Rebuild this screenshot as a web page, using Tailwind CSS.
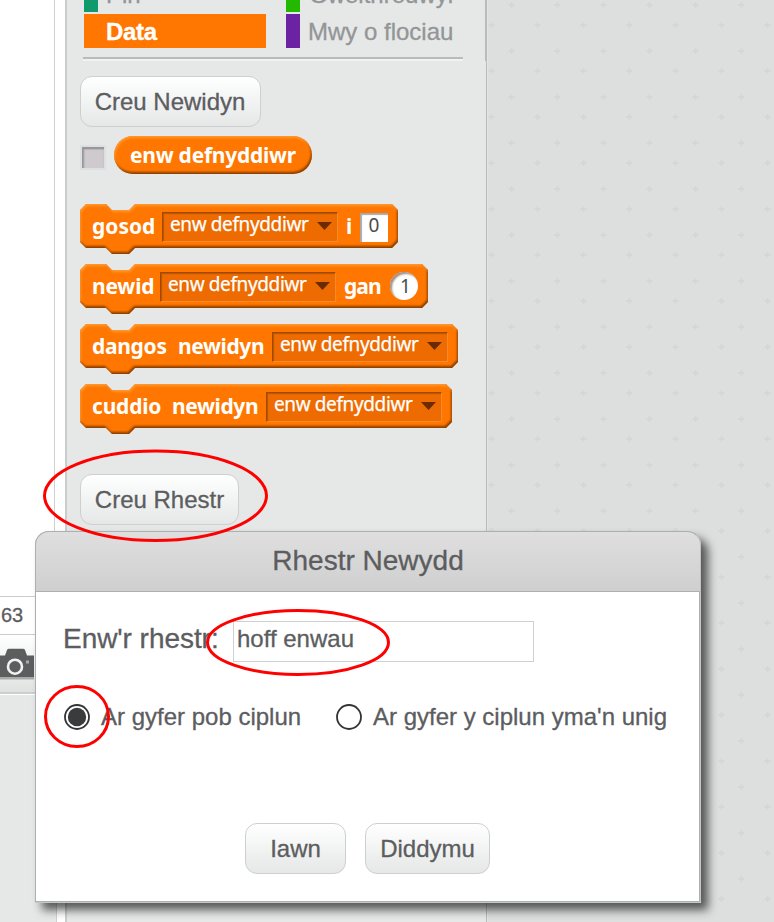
<!DOCTYPE html>
<html lang="cy">
<head>
<meta charset="utf-8">
<title>Scratch – Data</title>
<script src="https://cdn.jsdelivr.net/npm/@tailwindcss/browser@4"></script>
</head>
<body class="relative flex h-[922px] w-[774px] overflow-hidden bg-white font-['Liberation_Sans',Arial,sans-serif] text-[24px] text-[#5c5d5f] [-webkit-text-stroke:0.3px_currentColor]">

<!-- shared bevel filter -->
<svg class="absolute h-0 w-0" aria-hidden="true">
  <defs>
    <filter id="bevel" x="-5%" y="-10%" width="110%" height="120%" color-interpolation-filters="sRGB">
      <feGaussianBlur in="SourceAlpha" stdDeviation="1.3" result="b"/>
      <feOffset in="b" dx="-1.3" dy="-1.7" result="bo"/>
      <feComposite in="SourceAlpha" in2="bo" operator="out" result="darkA"/>
      <feFlood flood-color="#6a2e00" flood-opacity="0.8"/>
      <feComposite in2="darkA" operator="in" result="dark"/>
      <feOffset in="b" dx="1.3" dy="1.6" result="lo"/>
      <feComposite in="SourceAlpha" in2="lo" operator="out" result="lightA"/>
      <feFlood flood-color="#ffa640" flood-opacity="0.7"/>
      <feComposite in2="lightA" operator="in" result="light"/>
      <feMerge><feMergeNode in="SourceGraphic"/><feMergeNode in="dark"/><feMergeNode in="light"/></feMerge>
    </filter>
  </defs>
</svg>

<!-- stage column -->
<div class="flex w-[65px] shrink-0 flex-col">
  <div class="flex h-[750px] w-[55px] flex-col border-r border-[#cfd0d1]">
    <div class="h-[596px] bg-white"></div>
    <div class="h-[39px] border-y border-[#cbcccd] pl-px text-[20px] leading-[37px]">63</div>
    <div class="flex h-[59px] flex-col border-b-2 border-b-[#cccece] bg-linear-to-b from-white to-[#e0e2e2] pt-[13px]">
      <svg class="h-[32px] w-[35px]" viewBox="0 0 35 32">
        <path d="M0 7.500H5L7 2Q7.500 0.700 9 0.700H23Q24.500 0.700 25 2L27 7.500H34V29H0Z" fill="#5c5d5f"/>
        <rect x="0" y="29" width="34" height="2.500" fill="#a9abab"/>
        <circle cx="15" cy="18.700" r="7" fill="#5c5d5f" stroke="#f2f2f2" stroke-width="2.600"/>
        <rect x="26" y="12.500" width="3" height="3" fill="#a9abab"/>
      </svg>
    </div>
    <div class="grow border-t border-white bg-[#e5e8e7]"></div>
  </div>
  <div class="w-[57px] grow border-r border-[#cfd0d1] bg-[#e5e8e7]"></div>
</div>

<!-- palette -->
<div class="flex w-[422px] shrink-0 flex-col border-l-2 border-[#cbcdcd] bg-[#e5e8e7]">
  <div class="flex h-[61px] w-[420px] flex-col border-r-2 border-[#b9bbbb]">
    <div class="flex h-[12px] items-end overflow-hidden pl-[17px] text-[#939597]">
      <div class="flex h-[34px] w-[202px] items-center"><span class="h-[34px] w-[14px] bg-[#0e9a6c]"></span><span class="pl-[8px] leading-[36px]">Pin</span></div>
      <div class="flex h-[34px] items-center"><span class="h-[34px] w-[14px] bg-[#23b900]"></span><span class="pl-[9px] leading-[36px]">Gweithredwyr</span></div>
    </div>
    <div class="mt-[2px] flex h-[34px] pl-[17px]">
      <div class="mr-[20px] w-[182px] bg-[#ff7700] pl-[22px] leading-[35px] font-bold tracking-[-0.3px] text-white">Data</div>
      <div class="flex text-[#939597]"><span class="w-[14px] bg-[#6b22a3]"></span><span class="pl-[8px] leading-[35px]">Mwy o flociau</span></div>
    </div>
    <div class="mt-[9px] ml-[16px] h-[4px] w-[380px] border-b-2 border-[#f0f2f1] bg-[#b9bcba]"></div>
  </div>
  <div class="flex grow flex-col items-start border-r border-[#b9bbbb] pt-[15px] pl-[13px]">
    <button class="h-[51px] w-[181px] rounded-[12px] border border-[#cdcfd0] bg-linear-to-b from-white to-[#e5e8e7] pr-px leading-[49px]">Creu Newidyn</button>

    <div class="mt-[9px] flex h-[38px] items-center">
      <span class="mt-[5px] h-[25px] w-[26px] border-2 border-[#dce0e3] bg-[#cfcacd] shadow-[inset_2px_2px_2px_#98969a,inset_0_2px_1px_#98969a]"></span>
      <div class="relative ml-[8px] h-[38px] w-[198px]">
        <svg class="absolute inset-0 h-[38px] w-[198px]" viewBox="0 0 198 38"><rect width="198" height="38" rx="19" fill="#ff7700" filter="url(#bevel)"/></svg>
        <span class="relative block pl-[16px] font-['Noto_Sans',sans-serif] text-[21px] leading-[38px] font-bold tracking-[-0.25px] whitespace-nowrap text-white [-webkit-text-stroke:0]">enw defnyddiwr</span>
      </div>
    </div>

    <div class="mt-[30px] flex flex-col gap-[16px] font-['Noto_Sans',sans-serif] text-[21px] leading-[44px] font-bold whitespace-nowrap text-white [-webkit-text-stroke:0]">
      <div class="relative h-[44px] w-[318px]">
        <svg class="absolute top-0 left-0 h-[50px] w-[318px]" viewBox="0 0 318 50"><path d="M0 6L6 0H26L32 6H49L55 0H312L318 6V38L312 44H55L49 50H32L26 44H6L0 38Z" fill="#ff7700" filter="url(#bevel)"/></svg>
        <div class="relative flex h-[44px] pl-[12px]">
          <span class="w-[70px]">gosod</span>
          <span class="mt-[8px] flex h-[30px] w-[176px] border border-[#f88a2c] border-t-[#a04a00] border-l-[#a04a00] bg-[#ed6b00] pl-[7px] text-[19px] leading-[23px] font-normal tracking-[-0.38px] shadow-[inset_1px_1px_1px_#b85400] [-webkit-text-stroke:0.25px]">enw defnyddiwr<svg class="mt-[9px] ml-[9px] h-[8px] w-[15px]" viewBox="0 0 15 8"><path d="M0 0H15L7.500 8Z" fill="#6b2b00"/></svg></span>
          <span class="ml-[8px] w-[14px]">i</span>
          <span class="mt-[9px] h-[29px] w-[28px] bg-white text-center text-[19px] leading-[24px] font-normal text-[#4a4b4d] shadow-[inset_2px_2px_1px_#a9a9ad]">0</span>
        </div>
      </div>

      <div class="relative h-[44px] w-[348px]">
        <svg class="absolute top-0 left-0 h-[50px] w-[348px]" viewBox="0 0 348 50"><path d="M0 6L6 0H26L32 6H49L55 0H342L348 6V38L342 44H55L49 50H32L26 44H6L0 38Z" fill="#ff7700" filter="url(#bevel)"/></svg>
        <div class="relative flex h-[44px] pl-[12px]">
          <span class="w-[68px] tracking-[-0.2px]">newid</span>
          <span class="mt-[8px] flex h-[30px] w-[176px] border border-[#f88a2c] border-t-[#a04a00] border-l-[#a04a00] bg-[#ed6b00] pl-[7px] text-[19px] leading-[23px] font-normal tracking-[-0.38px] shadow-[inset_1px_1px_1px_#b85400] [-webkit-text-stroke:0.25px]">enw defnyddiwr<svg class="mt-[9px] ml-[9px] h-[8px] w-[15px]" viewBox="0 0 15 8"><path d="M0 0H15L7.500 8Z" fill="#6b2b00"/></svg></span>
          <span class="ml-[8px] w-[46px] tracking-[-0.9px]">gan</span>
          <span class="mt-[8px] h-[28px] w-[28px] rounded-full bg-white pl-[3px] text-center text-[19px] leading-[28px] font-normal text-[#4a4b4d] shadow-[inset_2px_2px_2px_#a08f84]">1</span>
        </div>
      </div>

      <div class="relative h-[44px] w-[378px]">
        <svg class="absolute top-0 left-0 h-[50px] w-[378px]" viewBox="0 0 378 50"><path d="M0 6L6 0H26L32 6H49L55 0H372L378 6V38L372 44H55L49 50H32L26 44H6L0 38Z" fill="#ff7700" filter="url(#bevel)"/></svg>
        <div class="relative flex h-[44px] pl-[12px]">
          <span class="w-[86px] tracking-[-0.3px]">dangos</span>
          <span class="w-[94px] tracking-[-0.4px]">newidyn</span>
          <span class="mt-[8px] flex h-[30px] w-[176px] border border-[#f88a2c] border-t-[#a04a00] border-l-[#a04a00] bg-[#ed6b00] pl-[7px] text-[19px] leading-[23px] font-normal tracking-[-0.38px] shadow-[inset_1px_1px_1px_#b85400] [-webkit-text-stroke:0.25px]">enw defnyddiwr<svg class="mt-[9px] ml-[9px] h-[8px] w-[15px]" viewBox="0 0 15 8"><path d="M0 0H15L7.500 8Z" fill="#6b2b00"/></svg></span>
        </div>
      </div>

      <div class="relative h-[44px] w-[372px]">
        <svg class="absolute top-0 left-0 h-[50px] w-[372px]" viewBox="0 0 372 50"><path d="M0 6L6 0H26L32 6H49L55 0H366L372 6V38L366 44H55L49 50H32L26 44H6L0 38Z" fill="#ff7700" filter="url(#bevel)"/></svg>
        <div class="relative flex h-[44px] pl-[12px]">
          <span class="w-[80px] tracking-[-0.2px]">cuddio</span>
          <span class="w-[94px] tracking-[-0.4px]">newidyn</span>
          <span class="mt-[8px] flex h-[30px] w-[176px] border border-[#f88a2c] border-t-[#a04a00] border-l-[#a04a00] bg-[#ed6b00] pl-[7px] text-[19px] leading-[23px] font-normal tracking-[-0.38px] shadow-[inset_1px_1px_1px_#b85400] [-webkit-text-stroke:0.25px]">enw defnyddiwr<svg class="mt-[9px] ml-[9px] h-[8px] w-[15px]" viewBox="0 0 15 8"><path d="M0 0H15L7.500 8Z" fill="#6b2b00"/></svg></span>
        </div>
      </div>
    </div>

    <button class="mt-[46px] h-[51px] w-[159px] rounded-[12px] border border-[#cdcfd0] bg-linear-to-b from-white to-[#e5e8e7] leading-[49px]">Creu Rhestr</button>
  </div>
</div>

<!-- scripts pane -->
<svg class="h-[922px] w-[287px] shrink-0 bg-[#dddfde]">
  <defs>
    <pattern id="plus" width="46" height="46" patternUnits="userSpaceOnUse">
      <path d="M21.500 5H27.500M24.500 2V8M1.500 25H7.500M4.500 22V28" stroke="#d5d7d7" stroke-width="1.800"/>
    </pattern>
  </defs>
  <rect width="287" height="922" fill="url(#plus)"/>
  <rect width="1" height="922" fill="#e3e5e4"/>
</svg>

<!-- dialog -->
<div class="absolute top-[531px] left-[35px] flex h-[372px] w-[666px] flex-col rounded-t-[14px] bg-[#c6c7c8] pr-px pb-px shadow-[7px_7px_10px_rgba(0,0,0,0.62)]">
  <div class="-mr-px h-[60px] shrink-0 rounded-t-[14px] border border-b-0 border-[#aeafb0] border-r-[#c0c1c2] bg-linear-to-b from-[#dfdfdf] to-[#cfcfcf] text-center text-[28px] leading-[57px]">Rhestr Newydd</div>
  <div class="flex grow flex-col border border-[#aeafb0] bg-white">
    <div class="mt-[29px] flex h-[41px] pl-[27px]">
      <label class="w-[170px] text-[28px] leading-[35px] tracking-[-0.05px]">Enw'r rhestr:</label>
      <div class="h-[41px] w-[301px] border border-[#cfd0d1] pl-[3px] leading-[34px]">hoff enwau</div>
    </div>
    <div class="mt-[41px] flex h-[28px] items-center pl-[28px]">
      <svg class="h-[26px] w-[26px]" viewBox="0 0 26 26"><circle cx="13" cy="13" r="12" fill="none" stroke="#333436" stroke-width="1.800"/><circle cx="13" cy="13" r="9.200" fill="#3a3b3c"/></svg>
      <span class="ml-[11px] w-[235px] leading-[28px]">Ar gyfer pob ciplun</span>
      <svg class="h-[26px] w-[26px]" viewBox="0 0 26 26"><circle cx="13" cy="13" r="12" fill="none" stroke="#333436" stroke-width="1.800"/></svg>
      <span class="ml-[11px] leading-[28px] whitespace-nowrap">Ar gyfer y ciplun yma'n unig</span>
    </div>
    <div class="mt-[92px] flex gap-[19px] pl-[209px]">
      <button class="h-[51px] w-[101px] rounded-[12px] border border-[#cdcfd0] bg-linear-to-b from-white to-[#e5e8e7] leading-[49px]">Iawn</button>
      <button class="h-[51px] w-[125px] rounded-[12px] border border-[#cdcfd0] bg-linear-to-b from-white to-[#e5e8e7] leading-[49px]">Diddymu</button>
    </div>
  </div>
</div>

<!-- highlight rings drawn over the dialog -->
<svg class="absolute inset-0 h-[922px] w-[774px]" viewBox="0 0 774 922" fill="none" stroke="#fe0000" stroke-width="3">
  <ellipse cx="155.500" cy="495.800" rx="111" ry="44.700"/>
  <ellipse cx="298" cy="642.500" rx="90.500" ry="32"/>
  <ellipse cx="77" cy="716.500" rx="31.500" ry="30"/>
</svg>
</body>
</html>
